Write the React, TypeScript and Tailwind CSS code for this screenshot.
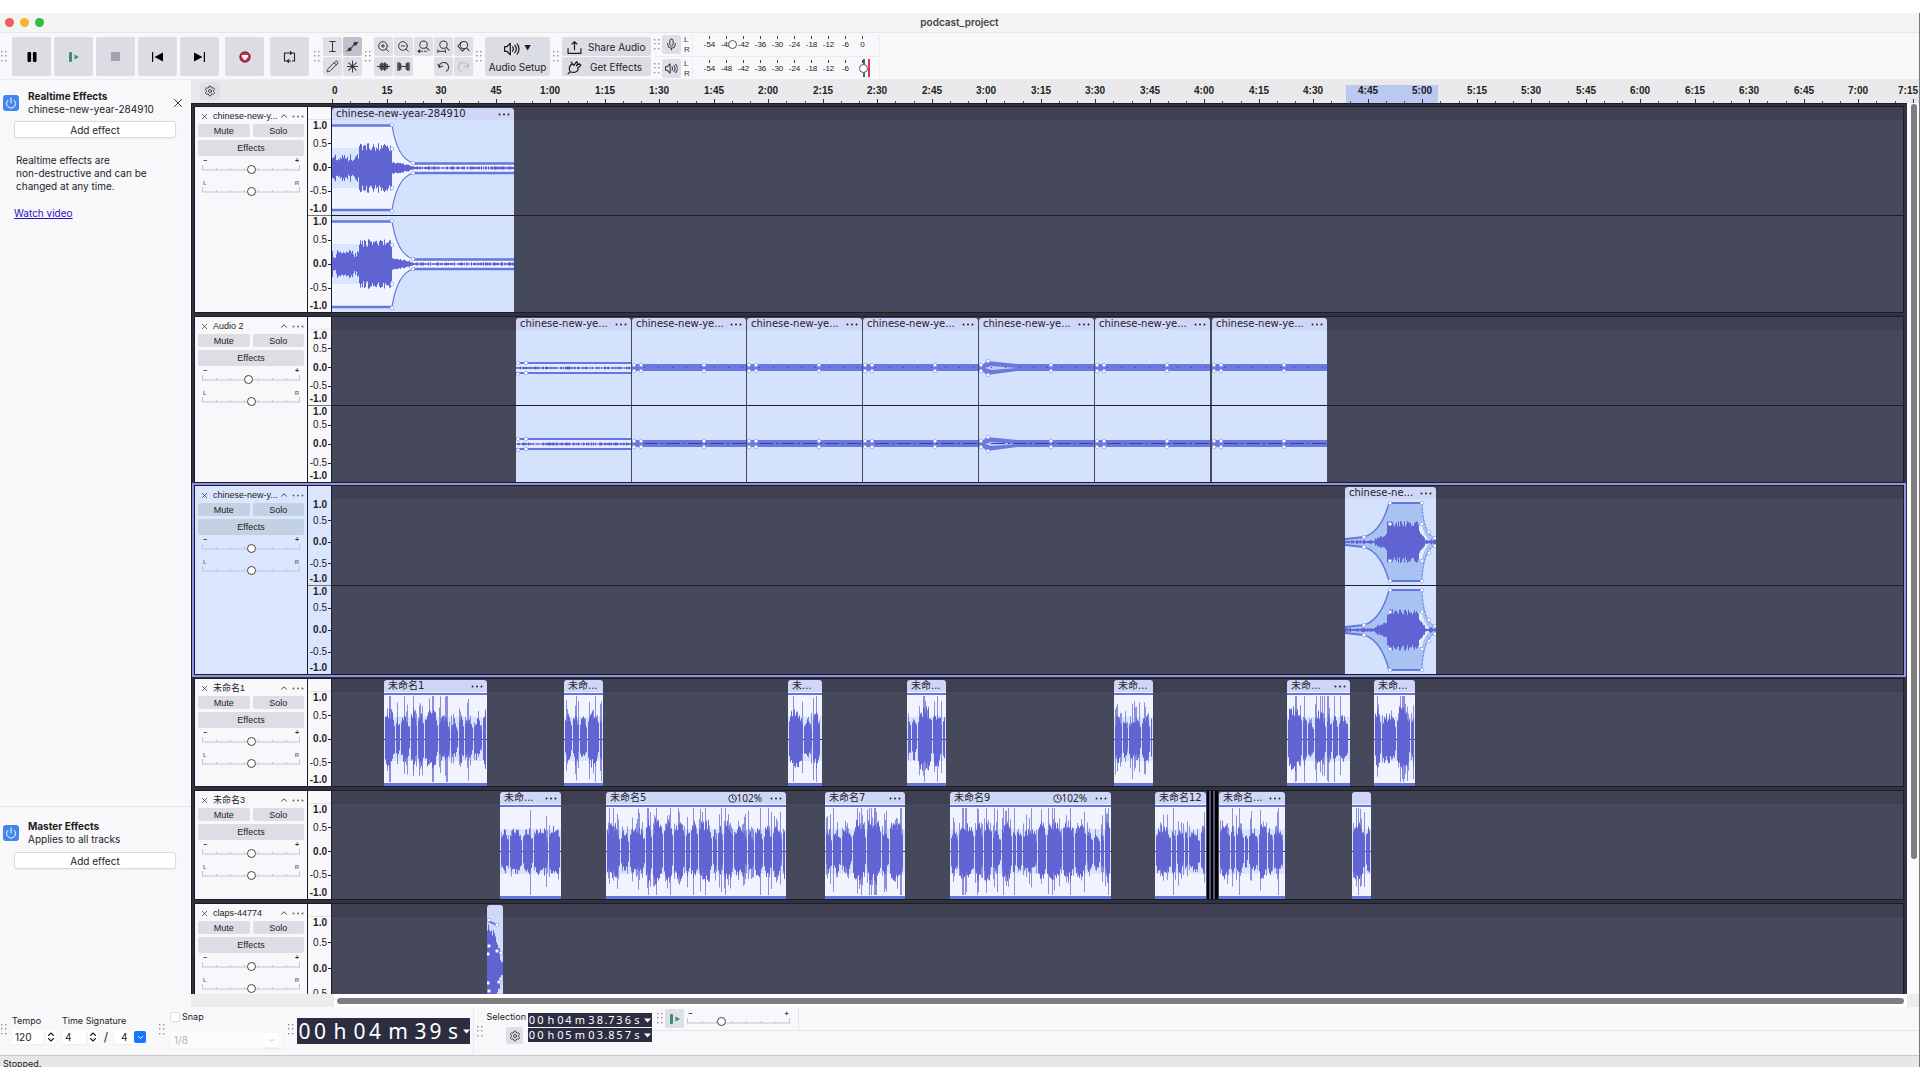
import type { ReactNode } from "react"
import { Settings, ZoomIn, ZoomOut, Pencil, Mic, Volume2, X, ChevronUp, ChevronDown, ChevronsUpDown, Power, Clock } from "lucide-react"

type WaveKind = "intro" | "flat" | "flatOpen" | "swell" | "fade" | "speech" | "claps" | "sliver"

interface Clip {
    start: number
    end: number
    title: string
    kind: WaveKind
    menu?: boolean
    speed?: string
}

interface TrackData {
    name: string
    channels: number[]
    clips: Clip[]
    volume?: number
    selected?: boolean
}

const PX_PER_15S = 54.51

const tracks: TrackData[] = [
    {
        name: "chinese-new-y...",
        channels: [95, 96],
        clips: [{ start: 0, end: 182, title: "chinese-new-year-284910", kind: "intro", menu: true }],
    },
    {
        name: "Audio 2",
        channels: [75, 76],
        volume: 47,
        clips: [
            { start: 184, end: 299, title: "chinese-new-ye...", kind: "flatOpen", menu: true },
            { start: 300, end: 414, title: "chinese-new-ye...", kind: "flat", menu: true },
            { start: 415, end: 530, title: "chinese-new-ye...", kind: "flat", menu: true },
            { start: 531, end: 646, title: "chinese-new-ye...", kind: "flat", menu: true },
            { start: 647, end: 762, title: "chinese-new-ye...", kind: "swell", menu: true },
            { start: 763, end: 878, title: "chinese-new-ye...", kind: "flat", menu: true },
            { start: 880, end: 995, title: "chinese-new-ye...", kind: "flat", menu: true },
        ],
    },
    {
        name: "chinese-new-y...",
        channels: [86, 88],
        selected: true,
        clips: [{ start: 1013, end: 1104, title: "chinese-ne...", kind: "fade", menu: true }],
    },
    {
        name: "未命名1",
        channels: [94],
        clips: [
            { start: 52, end: 155, title: "未命名1", kind: "speech", menu: true },
            { start: 232, end: 271, title: "未命...", kind: "speech" },
            { start: 456, end: 490, title: "未...", kind: "speech" },
            { start: 575, end: 614, title: "未命...", kind: "speech" },
            { start: 782, end: 821, title: "未命...", kind: "speech" },
            { start: 955, end: 1018, title: "未命...", kind: "speech", menu: true },
            { start: 1042, end: 1083, title: "未命...", kind: "speech" },
        ],
    },
    {
        name: "未命名3",
        channels: [95],
        clips: [
            { start: 168, end: 229, title: "未命...", kind: "speech", menu: true },
            { start: 274, end: 454, title: "未命名5", kind: "speech", menu: true, speed: "102%" },
            { start: 493, end: 573, title: "未命名7", kind: "speech", menu: true },
            { start: 618, end: 779, title: "未命名9", kind: "speech", menu: true, speed: "102%" },
            { start: 823, end: 874, title: "未命名12", kind: "speech" },
            { start: 875, end: 886, title: "", kind: "sliver" },
            { start: 887, end: 953, title: "未命名...", kind: "speech", menu: true },
            { start: 1020, end: 1039, title: "", kind: "speech" },
        ],
    },
    {
        name: "claps-44774",
        channels: [103],
        clips: [{ start: 155, end: 171, title: "", kind: "claps" }],
    },
]

function random(seed: number) {
    let s = seed * 2654435761 + 12345
    return () => {
        s = (s + 0x6d2b79f5) | 0
        let t = Math.imul(s ^ (s >>> 15), 1 | s)
        t = (t + Math.imul(t ^ (t >>> 7), 61 | t)) ^ t
        return ((t ^ (t >>> 14)) >>> 0) / 4294967296
    }
}

// one vertical line per pixel column, amp gives the half height
function columns(from: number, to: number, mid: number, amp: (x: number) => number) {
    let d = ""
    for (let x = from; x < to; x++) {
        const a = amp(x)
        d += `M${x + 0.5} ${(mid - a).toFixed(1)}V${(mid + a).toFixed(1)}`
    }
    return d
}

function Points({ at }: { at: number[][] }) {
    return (
        <g fill="#fff" stroke="#8f9be0" strokeWidth={0.7}>
            {at.map(([x, y], i) => <circle key={i} cx={x} cy={y} r={1.8} />)}
        </g>
    )
}

function SpeechWave({ w, h, seed }: { w: number; h: number; seed: number }) {
    const rnd = random(seed)
    const mid = h / 2
    let peaks = ""
    let rms = ""
    let left = 0
    let level = 0.5
    let length = 1
    for (let x = 1; x < w - 1; x++) {
        if (left <= 0) {
            length = 3 + Math.floor(rnd() * 13)
            left = length
            level = 0.36 + rnd() * 0.24
            if (x > 2) continue
        }
        left--
        const edge = Math.min(1, 0.6 + Math.min(left, length - left) * 0.15)
        const up = mid * level * edge * (0.8 + rnd() * 0.4)
        const down = mid * level * edge * (0.8 + rnd() * 0.4)
        const pick = rnd()
        const tall = pick > 0.88 ? 1.8 + rnd() * 0.9 : pick > 0.6 ? 1.2 + rnd() * 0.6 : 1.05
        rms += `M${x + 0.5} ${(mid - up).toFixed(1)}V${(mid + down).toFixed(1)}`
        peaks += `M${x + 0.5} ${Math.max(4, mid - up * tall).toFixed(1)}V${Math.min(h - 4, mid + down * tall * 0.9).toFixed(1)}`
    }
    return (
        <>
            <rect width={w} height={h} fill="#f1f4ff" />
            <rect y={mid * 0.53} width={w} height={mid * 0.94} fill="#dae3fc" />
            <path d={`M0 ${Math.floor(mid) + 0.5}H${w}`} stroke="#33355a" />
            <path d={peaks} stroke="#8b8ddd" />
            <path d={rms} stroke="#6164d2" />
            <rect width={w} height={2} y={1} fill="#6477dc" />
            <rect width={w} height={3} y={h - 3} fill="#6477dc" />
        </>
    )
}

function IntroWave({ w, h, seed }: { w: number; h: number; seed: number }) {
    const rnd = random(seed)
    const m = Math.round(h / 2)
    const top = 5
    const bottom = h - 5
    const wave = columns(0, w, m, (x) => {
        if (x < 27) return 6 + rnd() * 8
        if (x < 60) return 17 + rnd() * 8
        if (x < 80) return 1.5 + (80 - x) * 0.18 + rnd() * 1.5
        return 0.4 + rnd() * 1.4
    })
    return (
        <>
            <rect width={w} height={h} fill="#d5e2fe" />
            <path d={`M0 ${top}H60Q65 ${m - 10} 81 ${m - 5}H${w}V${m + 5}H81Q65 ${m + 10} 60 ${bottom}H0Z`} fill="#f1f5ff" />
            <rect y={m - 20} width={60} height={40} fill="#d8e5fe" />
            <path d={wave} stroke="#6063d2" />
            <g fill="none" stroke="#6477dc">
                <path d={`M60 ${top}Q65 ${m - 10} 81 ${m - 5}M60 ${bottom}Q65 ${m + 10} 81 ${m + 5}`} strokeWidth={1.2} />
                <path d={`M0 ${top}.5H60M0 ${bottom}H60M81 ${m - 4.5}H${w}M81 ${m + 5}H${w}`} strokeWidth={2.4} />
            </g>
            <Points at={[[60, top], [60, m - 19], [60, m + 20], [60, bottom + 1], [81, m - 5], [81, m + 5]]} />
        </>
    )
}

function FlatWave({ w, h, seed, kind }: { w: number; h: number; seed: number; kind: WaveKind }) {
    const rnd = random(seed)
    const m = Math.round(h / 2)
    const wave = columns(0, w, m, () => 0.3 + rnd() * 1.2)
    return (
        <>
            <rect width={w} height={h} fill="#d5e2fe" />
            {kind === "flatOpen" ? (
                <>
                    <rect y={m - 4} width={w} height={8} fill="#e4eaff" />
                    <path d={wave} stroke="#5b5ec8" />
                    <path d={`M0 ${m - 5}H${w}M0 ${m + 5}H${w}`} stroke="#6477dc" strokeWidth={2} />
                    <Points at={[[2, m - 5], [2, m + 6], [10, m - 5], [10, m + 5]]} />
                </>
            ) : (
                <>
                    <rect y={m - 4} width={w} height={7} fill="#6b79df" />
                    {kind === "swell" && (
                        <>
                            <path d={`M2 ${m - 2}L8 ${m - 7}L38 ${m - 4}V${m + 3}L8 ${m + 7}L2 ${m + 2}Z`} fill="#6b79df" />
                            <path d={`M6 ${m}L12 ${m - 2}L38 ${m}L12 ${m + 2}Z`} fill="#c3cbf5" />
                        </>
                    )}
                    <path d={`M12 ${m - 0.5}H${w}`} stroke="#3c40ad" strokeDasharray={seed % 2 ? "1 13" : "14 3 2 3"} />
                    <Points at={[[2, m - 3], [2, m + 3], [9, m - (kind === "swell" ? 7 : 3)], [9, m + (kind === "swell" ? 7 : 3)], [72, m - 3], [72, m + 3]]} />
                </>
            )}
        </>
    )
}

function FadeWave({ w, h, seed }: { w: number; h: number; seed: number }) {
    const rnd = random(seed)
    const m = Math.round(h / 2)
    const a = m - 4
    const wave = columns(0, w, m, (x) => {
        if (x < 30) return 0.6 + rnd() * 1.5
        if (x < 42) return 2 + (x - 30) * 0.4 + rnd() * 2
        if (x < 74) return 15 + rnd() * 6
        if (x < 80) return 2 + (80 - x) * 1.2 + rnd() * 2
        return 0.8 + rnd() * 2
    })
    return (
        <>
            <rect width={w} height={h} fill="#d5e2fe" />
            <path
                d={`M0 ${m - 3}L19 ${m - 5}Q36 ${m - 10} 44 ${m - a}H77Q78 ${m - 8} 91 ${m - 3}V${m + 3}Q78 ${m + 8} 77 ${m + a}H44Q36 ${m + 10} 19 ${m + 5}L0 ${m + 3}Z`}
                fill="#a8c2f1"
            />
            <path d={`M74 ${m - 17}H77Q79 ${m - 6} 86 ${m}Q79 ${m + 6} 77 ${m + 17}H74Z`} fill="#e6edff" />
            <path d={wave} stroke="#6063d2" />
            <g fill="none" stroke="#6477dc">
                <path d={`M19 ${m - 5}Q36 ${m - 10} 44 ${m - a}M19 ${m + 5}Q36 ${m + 10} 44 ${m + a}`} strokeWidth={1.4} />
                <path d={`M77 ${m - a}Q78 ${m - 8} 91 ${m - 3}M77 ${m + a}Q78 ${m + 8} 91 ${m + 3}`} strokeWidth={1} strokeDasharray="3 1" />
                <path d={`M0 ${m - 3}L19 ${m - 5}M0 ${m + 3}L19 ${m + 5}M44 ${m - a}H77M44 ${m + a}H77`} strokeWidth={2} />
            </g>
            <Points at={[[19, m - 5], [19, m + 5], [45, m - a], [45, m + a], [45, m - 18], [45, m + 19], [77, m - a], [77, m + a], [77, m - 18], [77, m + 19], [84, m - 10], [84, m + 11], [90, m - 4], [90, m + 4]]} />
        </>
    )
}

function ClapsWave({ w, h, seed }: { w: number; h: number; seed: number }) {
    const rnd = random(seed)
    const m = h / 2
    const wave = columns(0, w, m, (x) => Math.max(6, 44 - x * x * 0.16 - rnd() * 9))
    return (
        <>
            <rect width={w} height={h} fill="#cfdcfb" />
            <path d={wave} stroke="#6063d2" />
            <path d="M1 4L10 8" stroke="#6477dc" strokeWidth={2} />
            <Points at={[[2, 3], [10, 8], [2, 29], [1, 37], [10, 34], [14, 36], [1, 66], [2, 74], [12, 65], [14, 62]]} />
        </>
    )
}

function ClipWave({ kind, w, h, seed }: { kind: WaveKind; w: number; h: number; seed: number }) {
    return (
        <svg viewBox={`0 0 ${w} ${h}`} width={w} height={h} className="block" aria-hidden="true">
            {kind === "speech" && <SpeechWave w={w} h={h} seed={seed} />}
            {kind === "intro" && <IntroWave w={w} h={h} seed={seed} />}
            {(kind === "flat" || kind === "flatOpen" || kind === "swell") && <FlatWave w={w} h={h} seed={seed} kind={kind} />}
            {kind === "fade" && <FadeWave w={w} h={h} seed={seed} />}
            {kind === "claps" && <ClapsWave w={w} h={h} seed={seed} />}
        </svg>
    )
}

function Grip() {
    return (
        <svg width="6" height="11" viewBox="0 0 6 11" className="shrink-0" fill="#8f9096" aria-hidden="true">
            {[0, 4, 9].map((y) => (
                <g key={y}>
                    <rect x="0" y={y} width="1.4" height="1.4" />
                    <rect x="4" y={y} width="1.4" height="1.4" />
                </g>
            ))}
        </svg>
    )
}

function Dots() {
    return (
        <svg width="12" height="3" viewBox="0 0 12 3" fill="currentColor" className="block" aria-hidden="true">
            <circle cx="1.5" cy="1.5" r="1" />
            <circle cx="6" cy="1.5" r="1" />
            <circle cx="10.5" cy="1.5" r="1" />
        </svg>
    )
}

function BigButton({ label, children }: { label: string; children: ReactNode }) {
    return (
        <button aria-label={label} className="flex size-[39px] items-center justify-center rounded-xs bg-[#dcdde4] text-black">
            {children}
        </button>
    )
}

function ToolButton({ label, active, children }: { label: string; active?: boolean; children: ReactNode }) {
    return (
        <button
            aria-label={label}
            className={`flex size-[19px] shrink-0 items-center justify-center rounded-xs text-[#35363f] ${active ? "bg-[#bfc1cd]" : "bg-[#dfe0e6]"}`}
        >
            {children}
        </button>
    )
}

function Stroke({ size = 13, children }: { size?: number; children: ReactNode }) {
    return (
        <svg width={size} height={size} viewBox="0 0 14 14" fill="none" stroke="currentColor" strokeWidth="1.1" strokeLinecap="round" strokeLinejoin="round" aria-hidden="true">
            {children}
        </svg>
    )
}

function PlayIcon() {
    return (
        <svg width="12" height="12" viewBox="0 0 12 12" fill="#3f8f6b" aria-hidden="true">
            <rect x="1" y="1" width="3" height="10" rx="1" />
            <path d="M6.5 3.5L11 6L6.5 8.5Z" />
        </svg>
    )
}

function SpeakerIcon({ size = 13 }: { size?: number }) {
    return (
        <Stroke size={size}>
            <path d="M.5 5V9H2.5L5.5 12V2L2.5 5ZM7.5 5.2A3 3 0 0 1 7.5 8.8M9.5 3.8A5 5 0 0 1 9.5 10.2M11.5 2.5A7 7 0 0 1 11.5 11.5" />
        </Stroke>
    )
}

const meterMarks = ["-54", "-48", "-42", "-36", "-30", "-24", "-18", "-12", "-6", "0"]

function Meter({ label, value, icon, clip }: { label: string; value: number; icon: ReactNode; clip?: boolean }) {
    return (
        <div className="flex h-6 items-center border-b border-[#ececf0]">
            <Grip />
            <div className="ml-[2px]">
                <ToolButton label={label}>{icon}</ToolButton>
            </div>
            <div className="ml-[3px] flex w-2 flex-col text-[8px] leading-[10px] text-[#333]">
                <span>L</span>
                <span>R</span>
            </div>
            <div className="relative flex h-[19px] border-x border-[#ececf0] pt-px pr-2 pl-2">
                {meterMarks.map((mark) => (
                    <span key={mark} className="flex w-[17px] flex-col items-center gap-px text-[8px] leading-[9px] text-[#222]">
                        <i className="block h-[3px] w-px bg-[#444]" />
                        {mark}
                    </span>
                ))}
                {clip && (
                    <span className="absolute top-0 right-[9px] flex h-[18px] gap-[3px]">
                        <i className="w-[2px] bg-[#43658a]" />
                        <i className="w-[2px] bg-[#d03a5c]" />
                    </span>
                )}
                <input
                    type="range"
                    aria-label={`${label} level`}
                    defaultValue={value}
                    className="absolute inset-x-0 top-[5px] m-0 h-[9px] w-full appearance-none bg-transparent [&::-webkit-slider-thumb]:size-[9px] [&::-webkit-slider-thumb]:appearance-none [&::-webkit-slider-thumb]:rounded-full [&::-webkit-slider-thumb]:border [&::-webkit-slider-thumb]:border-[#555] [&::-webkit-slider-thumb]:bg-white"
                />
            </div>
        </div>
    )
}

function Slider({ label, value, low, high }: { label: string; value: number; low: string; high: string }) {
    return (
        <div>
            <div className={`flex h-[6px] justify-between px-px leading-[6px] font-bold ${low === "L" ? "text-[6px] text-[#777]" : "text-[7px] text-[#333]"}`}>
                <span>{low}</span>
                <span>{high}</span>
            </div>
            <div className="relative h-[10px]">
                <svg viewBox="0 0 98 10" preserveAspectRatio="none" className="absolute inset-0 h-full w-full" aria-hidden="true">
                    <path d="M.5 1V6M97.5 1V6M14.5 4V6M28.5 4V6M42.5 4V6M56.5 4V6M70.5 4V6M84.5 4V6M0 6H98" stroke="#b9c8da" fill="none" />
                </svg>
                <input
                    type="range"
                    aria-label={label}
                    defaultValue={value}
                    className="relative m-0 block h-[10px] w-full appearance-none bg-transparent [&::-webkit-slider-thumb]:size-[9px] [&::-webkit-slider-thumb]:appearance-none [&::-webkit-slider-thumb]:rounded-full [&::-webkit-slider-thumb]:border [&::-webkit-slider-thumb]:border-[#444] [&::-webkit-slider-thumb]:bg-white"
                />
            </div>
        </div>
    )
}

function Toolbar() {
    return (
        <div className="flex h-[47px] shrink-0 items-start border-b border-[#ececf0] bg-[#f8f8fa]">
            <div className="flex h-[47px] items-center pl-px"><Grip /></div>
            <div className="flex items-center gap-[3px] pt-1 pl-[5px]">
                <BigButton label="Pause">
                    <svg width="10" height="10" viewBox="0 0 10 10"><rect x=".5" width="3.6" height="10" rx="1" /><rect x="5.9" width="3.6" height="10" rx="1" /></svg>
                </BigButton>
                <BigButton label="Play"><PlayIcon /></BigButton>
                <BigButton label="Stop"><span className="size-[9px] bg-[#a3a4ad]" /></BigButton>
                <BigButton label="Skip to start">
                    <svg width="11" height="10" viewBox="0 0 11 10"><path d="M0 0H1.2V10H0ZM11 .5V9.5L2.5 5Z" /></svg>
                </BigButton>
                <BigButton label="Skip to end">
                    <svg width="11" height="10" viewBox="0 0 11 10"><path d="M9.8 0H11V10H9.8ZM0 .5V9.5L8.5 5Z" /></svg>
                </BigButton>
                <span />
                <BigButton label="Record">
                    <svg width="12" height="12" viewBox="0 0 12 12"><circle cx="6" cy="6" r="5" fill="#c73a4a" stroke="#8f2436" strokeWidth="1.4" /><path d="M2.6 4.6Q3 3.6 4.2 4H7.8Q9 3.6 9.4 4.6Q9.4 6 6 9.4Q2.6 6 2.6 4.6Z" fill="#fff" /></svg>
                </BigButton>
                <span />
                <BigButton label="Loop">
                    <svg width="13" height="12" viewBox="0 0 13 12" fill="none" stroke="#222" strokeWidth="1.1"><path d="M4 10H1.5V2H8M5 10H8M11.5 2V10H9M9 2H11.5M7 .3L9 2L7 3.7M6 8.3L4 10L6 11.7" /></svg>
                </BigButton>
            </div>
            <div className="flex items-center gap-[3px] pt-1 pl-[5px]">
                <Grip />
                <div className="grid grid-cols-2 gap-px">
                    <ToolButton label="Selection tool"><Stroke><path d="M4 1.5H10M4 12.5H10M7 1.5V12.5" /></Stroke></ToolButton>
                    <ToolButton label="Envelope tool" active>
                        <Stroke><path d="M1 12L4.5 9.5L9.5 4.5L13 2.5" /><circle cx="4" cy="10" r="1.5" fill="currentColor" /><circle cx="10" cy="4" r="1.5" fill="currentColor" /></Stroke>
                    </ToolButton>
                    <ToolButton label="Draw tool"><Pencil size={13} strokeWidth={1.8} /></ToolButton>
                    <ToolButton label="Multi-tool"><Stroke><path d="M7 1V13M1.5 7H12.5M3 3L11 11M11 3L3 11" /></Stroke></ToolButton>
                </div>
                <Grip />
                <div className="grid grid-cols-5 gap-px">
                    <ToolButton label="Zoom in"><ZoomIn size={13} strokeWidth={1.8} /></ToolButton>
                    <ToolButton label="Zoom out"><ZoomOut size={13} strokeWidth={1.8} /></ToolButton>
                    <ToolButton label="Zoom to selection"><Stroke><circle cx="7" cy="5" r="4" /><path d="M10 8L13 11M1 12H6M3 10.5L1 12L3 13.5M8 12H10" /></Stroke></ToolButton>
                    <ToolButton label="Zoom to fit"><Stroke><circle cx="7" cy="5" r="4" /><path d="M10 8L13 11M1 12H9M1 10.5V13.5M9 10.5V13.5" /></Stroke></ToolButton>
                    <ToolButton label="Zoom toggle"><Stroke><circle cx="7.5" cy="5.5" r="4" /><path d="M10.5 8.5L13 11.5M4.5 2.5L1 6.5L6 12L8.5 9.4" /></Stroke></ToolButton>
                    <ToolButton label="Trim audio"><Stroke><path d="M.5 7H13.5M3.5 4.5V9.5M5 3V11M6.5 4V10M8 3V11M9.5 3.5V10.5M11 5V9" strokeWidth="1.3" /></Stroke></ToolButton>
                    <ToolButton label="Silence audio"><Stroke><path d="M1 3V11M2.5 3V11M4 4V10M10 4V10M11.5 3V11M13 3V11M4 7H10" strokeWidth="1.3" /></Stroke></ToolButton>
                    <span />
                    <ToolButton label="Undo"><Stroke><path d="M1 4.5L2.5 8L6 6.5M2.5 8A5 5 0 1 1 10 12" /></Stroke></ToolButton>
                    <ToolButton label="Redo"><span className="text-[#b9bac2]"><Stroke><path d="M13 4.5L11.5 8L8 6.5M11.5 8A5 5 0 1 0 4 12" /></Stroke></span></ToolButton>
                </div>
                <Grip />
            </div>
            <div className="flex items-center gap-[3px] pt-1 pl-[3px]">
                <button className="flex h-[39px] w-[65px] flex-col items-center justify-center gap-1 rounded-xs bg-[#dcdde4] text-[10px] leading-3">
                    <span className="flex items-center gap-1">
                        <SpeakerIcon size={16} />
                        <span className="text-[7px]">▼</span>
                    </span>
                    Audio Setup
                </button>
                <Grip />
                <div className="flex w-[89px] flex-col gap-px text-[10px]">
                    <button className="flex h-[19px] items-center gap-[6px] rounded-xs bg-[#dcdde4] pt-px pl-[5px]">
                        <Stroke size={15}><path d="M1 8V12.5H13V8M7 9V1.5M4.8 3.7L7 1.5L9.2 3.7" /></Stroke>
                        Share Audio
                    </button>
                    <button className="flex h-[19px] items-center gap-2 rounded-xs bg-[#dcdde4] pt-px pl-[5px]">
                        <Stroke size={15}><path d="M1 13L3 11M3 11C1.5 8 2.5 5 5 3.5L6.5 5L9 1.5L10 3L8.8 5.5L11.5 3.5L13 5L10 7.5C11.5 9.5 8 12.8 3 11ZM5 3.5L4 2" /></Stroke>
                        Get Effects
                    </button>
                </div>
            </div>
            <div className="pl-[3px] font-['Liberation_Sans',sans-serif]">
                <Meter label="Record meter" value={20} icon={<Mic size={13} strokeWidth={1.8} />} />
                <Meter label="Playback meter" value={94} icon={<SpeakerIcon />} clip />
            </div>
        </div>
    )
}

function PowerButton({ label }: { label: string }) {
    return (
        <button aria-label={label} className="flex size-4 shrink-0 items-center justify-center rounded-[3px] bg-[#4286f0] text-white">
            <Power size={12} strokeWidth={2} />
        </button>
    )
}

function AddEffect() {
    return (
        <button className="ml-[14px] block h-[17px] w-[162px] rounded-[3px] border border-[#dadade] bg-white text-[10px] leading-[14px] shadow-xs">
            Add effect
        </button>
    )
}

function EffectsPanel() {
    return (
        <aside className="flex w-[191px] shrink-0 flex-col bg-[#f8f8fa] text-[10px] leading-[13px] text-[#1c1c1e]">
            <section className="flex-1 pt-[10px]">
                <div className="flex items-center pr-[6px] pl-[3px]">
                    <PowerButton label="Realtime effects on" />
                    <div className="ml-[9px] flex-1">
                        <h2 className="font-bold">Realtime Effects</h2>
                        <p>chinese-new-year-284910</p>
                    </div>
                    <button aria-label="Close"><X size={14} strokeWidth={1.5} /></button>
                </div>
                <div className="pt-[5px]"><AddEffect /></div>
                <p className="mt-4 ml-4">
                    Realtime effects are<br />non-destructive and can be<br />changed at any time.
                </p>
                <a href="#video" className="mt-[14px] ml-[14px] inline-block text-[#2a12c4] underline">Watch video</a>
            </section>
            <section className="h-[201px] border-t border-[#e4e4e8] pt-[13px]">
                <div className="flex items-center pl-[3px]">
                    <PowerButton label="Master effects on" />
                    <div className="ml-[9px]">
                        <h2 className="font-bold">Master Effects</h2>
                        <p>Applies to all tracks</p>
                    </div>
                </div>
                <div className="pt-[6px]"><AddEffect /></div>
            </section>
        </aside>
    )
}

function timeLabel(i: number) {
    const s = i * 15
    if (s < 60) return `${s}`
    return `${Math.floor(s / 60)}:${String(s % 60).padStart(2, "0")}`
}

function TimeRuler() {
    return (
        <div className="flex h-[23px] shrink-0 overflow-hidden bg-[#e9e9eb]">
            <div className="w-[141px] shrink-0 pt-[2px] pl-[9px]">
                <button aria-label="Timeline options" className="flex h-[18px] w-5 items-center justify-center rounded-xs bg-[#dfe0e5] text-[#35363f]">
                    <Settings size={12} strokeWidth={1.8} />
                </button>
            </div>
            <div className="relative flex min-w-0 flex-1 overflow-hidden">
                <span className="absolute top-[5px] bottom-0 left-[1014px] w-[92px] bg-[#b9c9f2]" />
                {Array.from({ length: 30 }, (_, i) => (
                    <div
                        key={i}
                        className="relative flex shrink-0 flex-col justify-between"
                        style={{ width: Math.round((i + 1) * PX_PER_15S) - Math.round(i * PX_PER_15S) }}
                    >
                        <span
                            className={`w-fit pt-1 font-['Liberation_Sans',sans-serif] text-[10px] leading-[13px] font-bold text-[#222] ${i === 0 ? "" : i === 29 ? "-translate-x-[15px]" : "-translate-x-1/2"}`}
                        >
                            {timeLabel(i)}
                        </span>
                        <span className="flex h-1 items-end">
                            <i className="h-1 flex-1 border-l border-[#333]" />
                            <i className="h-[2px] flex-1 border-l border-[#555]" />
                            <i className="h-[2px] flex-1 border-l border-[#555]" />
                        </span>
                    </div>
                ))}
            </div>
        </div>
    )
}

function AmplitudeScale({ height }: { height: number }) {
    return (
        <div className="flex flex-col justify-between text-right text-[10px] leading-3" style={{ height }}>
            {["1.0", "0.5", "0.0", "-0.5", "-1.0"].map((v, i) => (
                <span
                    key={v}
                    className={`flex items-center justify-end ${i % 2 === 0 ? "font-bold" : ""} ${i === 0 ? "-mb-1.5" : i === 4 ? "-mt-1.5" : ""}`}
                >
                    {v}
                    <i className={`ml-px h-px w-[3px] ${i === 0 || i === 4 ? "" : "bg-[#222]"}`} />
                </span>
            ))}
        </div>
    )
}

function ClipView({ clip, gap, channels, seed }: { clip: Clip; gap: number; channels: number[]; seed: number }) {
    const w = clip.end - clip.start
    if (clip.kind === "sliver") {
        return (
            <div className="flex shrink-0 justify-between bg-[#55577a]" style={{ marginLeft: gap, width: w }}>
                <i className="w-[2px] bg-black" />
                <i className="w-[2px] bg-black" />
                <i className="w-[3px] bg-black" />
            </div>
        )
    }
    return (
        <div className="relative shrink-0 pt-px" style={{ marginLeft: gap, width: w }}>
            <div className="flex h-3 items-center justify-between overflow-hidden rounded-t-[3px] bg-[#d0d6f5] px-1 font-['DejaVu_Sans','Noto_Sans_CJK_SC',sans-serif] text-[10px] leading-3 whitespace-nowrap text-[#22232e]">
                <span>{clip.title}</span>
                <span className="flex items-center gap-2">
                    {clip.speed && (
                        <span className="flex items-center font-['Noto_Sans',sans-serif]">
                            <Clock size={9} strokeWidth={2.4} />
                            {clip.speed}
                        </span>
                    )}
                    {clip.menu && <button aria-label="Clip menu"><Dots /></button>}
                </span>
            </div>
            {channels.map((h, i) => (
                <div key={i} className={i > 0 ? "border-t border-[#1d1e2b]" : ""}>
                    <ClipWave kind={clip.kind} w={w} h={h} seed={seed + i} />
                </div>
            ))}
        </div>
    )
}

function TrackRow({ track, tight }: { track: TrackData; tight: boolean }) {
    const tone = track.selected ? "bg-[#dae6fe]" : "bg-[#f8f8fa]"
    const button = `rounded-xs text-[9px] ${track.selected ? "bg-[#c2d2e2]" : "bg-[#dddee5]"}`
    return (
        <article
            className={`flex shrink-0 ring-1 ring-[#1c1d2a] font-['Liberation_Sans','Noto_Sans_CJK_SC',sans-serif] text-[#222] ${tight ? "mb-1" : "mb-[5px]"} ${track.selected ? "outline-2 outline-offset-1 outline-[#8f93e2]" : ""}`}
        >
            <div className={`w-[112px] shrink-0 px-[3px] ${tone}`}>
                <div className="flex h-[17px] items-center pt-px text-[9px] leading-3">
                    <button aria-label="Close track" className="pr-px pl-[2px]"><X size={9} strokeWidth={1.8} /></button>
                    <span className="ml-[3px] flex-1 whitespace-nowrap">{track.name}</span>
                    <button aria-label="Collapse"><ChevronUp size={10} strokeWidth={2} /></button>
                    <button aria-label="Track menu" className="ml-[3px] text-[#666]"><Dots /></button>
                </div>
                <div className="grid grid-cols-2 gap-x-[3px] gap-y-[3px]">
                    <button className={`h-[13px] leading-[14px] ${button}`}>Mute</button>
                    <button className={`h-[13px] leading-[14px] ${button}`}>Solo</button>
                    <button className={`col-span-2 h-4 leading-4 ${button}`}>Effects</button>
                </div>
                <div className="flex flex-col gap-[6px] px-1 pt-[2px]">
                    <Slider label={`${track.name} volume`} value={track.volume ?? 50} low="−" high="+" />
                    <Slider label={`${track.name} pan`} value={50} low="L" high="R" />
                </div>
            </div>
            <div className={`w-[25px] shrink-0 border-x border-[#1c1d2a] ${tone}`}>
                <div className="h-[13px] border-b border-[#e3e4ea]" />
                {track.channels.map((h, i) => (
                    <div key={i} className={i > 0 ? "border-t border-[#777]" : ""}>
                        <AmplitudeScale height={h} />
                    </div>
                ))}
            </div>
            <div className="relative min-w-0 flex-1 overflow-hidden bg-[#46485b]">
                <div className="absolute inset-x-0 top-0 h-[13px] bg-[#3f4051]" />
                {track.channels.length > 1 && (
                    <div className="absolute inset-x-0 h-px bg-[#1d1e2b]" style={{ top: 13 + track.channels[0] }} />
                )}
                <div className="relative flex">
                    {track.clips.map((clip, i) => (
                        <ClipView
                            key={clip.start}
                            clip={clip}
                            gap={clip.start - (i > 0 ? track.clips[i - 1].end : 0)}
                            channels={track.channels}
                            seed={clip.start * 2 + 1}
                        />
                    ))}
                </div>
            </div>
        </article>
    )
}

function Cells({ text, widths }: { text: string[]; widths: string[] }) {
    return (
        <>
            {text.map((c, i) => <span key={i} className={`shrink-0 text-center ${widths[i]}`}>{c}</span>)}
        </>
    )
}

const bigWidths = ["w-[15px]", "w-4", "w-6", "w-[15px]", "w-4", "w-[30px]", "w-[15px]", "w-[15px]", "w-5"]
const smallWidths = ["w-2", "w-[9px]", "w-3", "w-[7px]", "w-[9px]", "w-[14px]", "w-[9px]", "w-2", "w-[4px]", "w-[7px]", "w-[9px]", "w-2", "w-[10px]"]

function DropArrow({ label }: { label: string }) {
    return (
        <button aria-label={label} className="shrink-0">
            <svg width="7" height="5" viewBox="0 0 7 5" fill="#fff" className="block"><path d="M0 .5H7L3.5 4.5Z" /></svg>
        </button>
    )
}

function SelectionTime({ value, label }: { value: string; label: string }) {
    return (
        <div role="group" aria-label={label} className="flex h-[14px] w-[124px] items-center bg-[#2c2d40] font-['Noto_Sans',sans-serif] text-[11px] leading-[14px] text-white">
            <Cells text={value.split("")} widths={smallWidths} />
            <span className="w-[2px]" />
            <DropArrow label={`${label} format`} />
        </div>
    )
}

function Spinner({ label, value, width }: { label: string; value: string; width: string }) {
    return (
        <div className="flex items-center gap-[2px]">
            <input id={label} defaultValue={value} className={`h-[14px] bg-white px-[3px] text-[10px] shadow-xs ${width}`} />
            <button aria-label={`Change ${label}`} className="flex h-[14px] w-[10px] items-center justify-center rounded-xs bg-white shadow-xs">
                <ChevronsUpDown size={12} strokeWidth={2.2} className="shrink-0" />
            </button>
        </div>
    )
}

function BottomBar() {
    return (
        <div className="flex h-12 shrink-0 items-start bg-[#f8f8fa] text-[9px] text-[#222]">
            <div className="flex h-11 items-center pl-px"><Grip /></div>
            <div className="ml-[5px] w-[50px] pt-2">
                <label htmlFor="tempo" className="block h-[15px] leading-3">Tempo</label>
                <Spinner label="tempo" value="120" width="w-8" />
            </div>
            <div className="w-[97px] pt-2">
                <label htmlFor="signature" className="block h-[15px] leading-3">Time Signature</label>
                <div className="flex items-center">
                    <Spinner label="signature" value="4" width="w-6" />
                    <span className="w-4 text-center text-[12px] leading-[14px]">/</span>
                    <span className="relative flex">
                        <select aria-label="Beat unit" className="h-[14px] w-8 appearance-none rounded-xs bg-white pl-[7px] text-[10px] leading-[14px] shadow-xs">
                            <option>4</option>
                        </select>
                        <span className="pointer-events-none absolute top-px right-0 flex size-3 items-center justify-center rounded-xs bg-[#1677ff] text-white">
                            <ChevronDown size={9} strokeWidth={2.5} />
                        </span>
                    </span>
                </div>
            </div>
            <div className="flex h-11 items-center"><Grip /></div>
            <div className="ml-[5px] w-[118px] pt-1">
                <label className="flex items-center gap-[2px] leading-3">
                    <input type="checkbox" className="size-[10px] appearance-none rounded-xs border border-[#e0e0e4] bg-white" />
                    Snap
                </label>
                <span className="relative mt-[10px] flex w-[112px]">
                    <select aria-label="Snap to" disabled className="h-[15px] w-full appearance-none bg-[#fbfbfc] pl-1 text-[10px] leading-[15px] text-[#b4b4b8] shadow-xs">
                        <option>1/8</option>
                    </select>
                    <span className="pointer-events-none absolute top-0 right-1 flex size-[14px] items-center justify-center rounded-xs bg-white text-[#b4b4b8] shadow-xs">
                        <ChevronDown size={9} strokeWidth={2} />
                    </span>
                </span>
            </div>
            <div className="flex h-11 items-center"><Grip /></div>
            <div role="group" aria-label="Audio position" className="mt-[11px] ml-[3px] flex h-[26px] w-[173px] items-center overflow-hidden bg-[#2c2d40] font-['Noto_Sans',sans-serif] text-[21px] leading-[26px] text-white">
                <Cells text={"00h04m39s".split("")} widths={bigWidths} />
                <DropArrow label="Position format" />
            </div>
            <div className="ml-[3px] flex h-12 items-center border-l border-[#e9e9ed] pl-[3px]"><Grip /></div>
            <div className="ml-[3px] flex w-[42px] flex-col items-end gap-1 pt-1">
                <span className="pr-[2px] leading-3">Selection</span>
                <button aria-label="Selection options" className="mr-[5px] flex size-[17px] items-center justify-center rounded-xs bg-[#dfe0e5] text-[#35363f]">
                    <Settings size={12} strokeWidth={1.8} />
                </button>
            </div>
            <div className="flex flex-col gap-px pt-[6px]">
                <SelectionTime label="Selection start" value="00h04m38.736s" />
                <SelectionTime label="Selection end" value="00h05m03.857s" />
            </div>
            <div className="flex h-6 w-[147px] items-center gap-[2px] border-r border-b border-[#e6e6ea] pl-[5px]">
                <Grip />
                <button aria-label="Play at speed" className="flex size-[19px] items-center justify-center rounded-xs bg-[#dfe0e5]"><PlayIcon /></button>
                <div className="w-[104px] pl-px">
                    <Slider label="Playback speed" value={32} low="−" high="+" />
                </div>
            </div>
            <div className="h-6 flex-1 border-b border-[#e6e6ea]" />
        </div>
    )
}

export default function App() {
    return (
        <div className="h-screen bg-white py-[13px]">
            <div className="flex h-full flex-col overflow-hidden border-r border-[#77787e] bg-[#f8f8fa] font-['Inter',sans-serif] text-[#1c1c1e]">
                <header className="relative flex h-5 shrink-0 items-center justify-center border-b border-[#e6e6e8] bg-[#f4f4f4]">
                    <div className="absolute left-[5px] flex gap-[6px]">
                        <button aria-label="Close window" className="size-[9px] rounded-full bg-[#f25d57]" />
                        <button aria-label="Minimise" className="size-[9px] rounded-full bg-[#f5b52e]" />
                        <button aria-label="Zoom window" className="size-[9px] rounded-full bg-[#2bc13f]" />
                    </div>
                    <h1 className="text-[10px] font-semibold text-[#444]">podcast_project</h1>
                </header>
                <Toolbar />
                <main className="flex min-h-0 flex-1">
                    <EffectsPanel />
                    <div className="flex min-w-0 flex-1 flex-col">
                        <TimeRuler />
                        <div className="flex min-h-0 flex-1">
                            <div className="flex min-w-0 flex-1 flex-col overflow-hidden border-t border-l border-[#1c1d2a] bg-[#31323f] pt-[3px] pr-1 pl-[3px]">
                                {tracks.map((track, i) => <TrackRow key={i} track={track} tight={i === 1} />)}
                            </div>
                            <div className="w-3 shrink-0 bg-[#fbfbfb] pt-px pl-1">
                                <div className="h-[755px] w-[6px] rounded-full bg-[#7d7e7d]" />
                            </div>
                        </div>
                        <div className="flex h-[13px] shrink-0 bg-[#ececee]">
                            <div className="w-[143px] shrink-0" />
                            <div className="mr-3 flex-1 bg-white px-[3px] pt-1">
                                <div className="h-[6px] rounded-full bg-[#7d7e7d]" />
                            </div>
                        </div>
                    </div>
                </main>
                <BottomBar />
                <footer className="h-3 shrink-0 overflow-hidden border-t border-[#c9c8cd] bg-[#e9e6e9] pl-[3px] text-[9px] leading-[15px]">Stopped.</footer>
            </div>
        </div>
    )
}
